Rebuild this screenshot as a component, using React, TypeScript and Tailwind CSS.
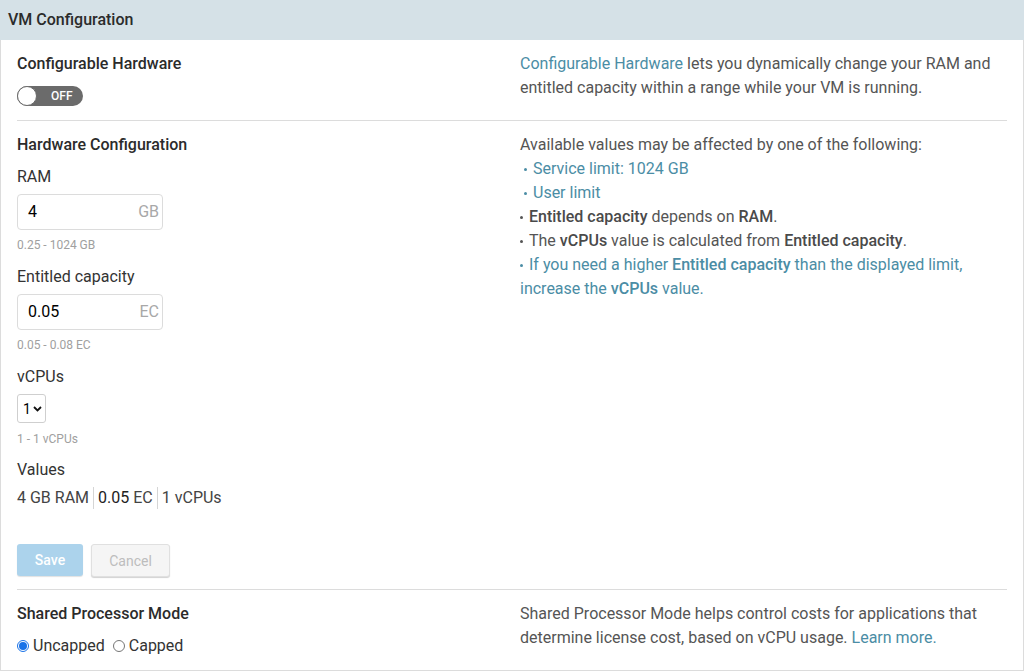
function Bullet({ indent = false, children }: { indent?: boolean; children: React.ReactNode }) {
    return (
        <div className={indent ? "flex items-center pl-[4px]" : "flex items-center"}>
            <span className="mr-[6px] inline-block h-[3px] w-[3px] shrink-0 rounded-full bg-current" />
            <span>{children}</span>
        </div>
    );
}

function UnitInput({ value, unit }: { value: string; unit: string }) {
    return (
        <div className="mt-[5px] flex h-[36px] w-[146px] items-center justify-between rounded-[4px] border border-[#dcdcdc] bg-white pl-[10px] pr-[3px]">
            <span className="text-[16px] text-black">{value}</span>
            <span className="text-[16px] text-[#a8a8a8]">{unit}</span>
        </div>
    );
}

export default function App() {
    return (
        <div className="min-h-[671px] bg-white font-['Roboto','Liberation_Sans',sans-serif] text-[16px] leading-[24px] text-[#333]">
            {/* Header */}
            <div className="flex h-[40px] items-center bg-[#d5e1e7] px-[8px] font-medium text-[#2b2b2b]">
                VM Configuration
            </div>
            <div className="h-[631px] border-x border-b border-[#dcdcdc] px-[16px]">
                {/* Configurable hardware */}
                <div className="grid grid-cols-2 gap-4 border-b border-[#dcdcdc] pb-[14px] pt-[12px]">
                    <div>
                        <div className="font-medium text-[#2b2b2b]">Configurable Hardware</div>
                        <div className="mt-[10px] flex h-[20px] w-[66px] items-center rounded-full bg-[#6b6b6b]">
                            <span className="h-[20px] w-[20px] rounded-full border border-[#6b6b6b] bg-white" />
                            <span className="ml-[14px] text-[12px] font-medium leading-none text-white">OFF</span>
                        </div>
                    </div>
                    <div className="text-[#555]">
                        <span className="text-[#4b8da5]">Configurable Hardware</span> lets you dynamically change your RAM and entitled capacity within a range while your VM is running.
                    </div>
                </div>

                {/* Hardware configuration */}
                <div className="grid grid-cols-2 gap-4 border-b border-[#dcdcdc] pb-[12px] pt-[12px]">
                    <div>
                        <div className="font-medium text-[#2b2b2b]">Hardware Configuration</div>
                        <div className="mt-[8px]">RAM</div>
                        <UnitInput value="4" unit="GB" />
                        <div className="mt-[7px] text-[12px] leading-[16px] text-[#a0a0a0]">0.25 - 1024 GB</div>
                        <div className="mt-[12px]">Entitled capacity</div>
                        <UnitInput value="0.05" unit="EC" />
                        <div className="mt-[7px] text-[12px] leading-[16px] text-[#a0a0a0]">0.05 - 0.08 EC</div>
                        <div className="mt-[12px]">vCPUs</div>
                        <div className="mt-[5px] flex h-[29px] w-[29px] items-center gap-[2px] rounded-[3px] border border-[#cfcfcf] pl-[5px]">
                            <span className="text-[14px] text-black">1</span>
                            <svg width="9" height="6" viewBox="0 0 9 6">
                                <path d="M1 1l3.5 3.5L8 1" fill="none" stroke="#111" strokeWidth="1.8" />
                            </svg>
                        </div>
                        <div className="mt-[8px] text-[12px] leading-[16px] text-[#a0a0a0]">1 - 1 vCPUs</div>
                        <div className="mt-[11px]">Values</div>
                        <div className="mt-[4px] flex items-center text-[#444]">
                            <span>4 GB RAM</span>
                            <span className="mx-[4px] h-[22px] w-px bg-[#d5d5d5]" />
                            <span>
                                <span className="text-[#222]">0.05</span> EC
                            </span>
                            <span className="mx-[4px] h-[22px] w-px bg-[#d5d5d5]" />
                            <span>1 vCPUs</span>
                        </div>
                        <div className="mt-[34px] flex gap-[8px]">
                            <button className="h-[32px] w-[66px] rounded-[3px] bg-[#acd3ec] text-[14px] font-medium text-white shadow-[0_1px_1px_rgba(0,0,0,0.12)]">
                                Save
                            </button>
                            <button className="h-[33px] w-[79px] rounded-[3px] border border-[#e0e0e0] bg-[#f5f5f5] text-[14px] text-[#bdbdbd] shadow-[0_1px_1px_rgba(0,0,0,0.18)]">
                                Cancel
                            </button>
                        </div>
                    </div>
                    <div className="text-[#555]">
                        <div>Available values may be affected by one of the following:</div>
                        <div className="text-[#4b8da5]">
                            <Bullet indent>Service limit: 1024 GB</Bullet>
                            <Bullet indent>User limit</Bullet>
                        </div>
                        <Bullet>
                            <b className="font-medium text-[#4a4a4a]">Entitled capacity</b> depends on <b className="font-medium text-[#4a4a4a]">RAM</b>.
                        </Bullet>
                        <Bullet>
                            The <b className="font-medium text-[#4a4a4a]">vCPUs</b> value is calculated from <b className="font-medium text-[#4a4a4a]">Entitled capacity</b>.
                        </Bullet>
                        <div className="text-[#4b8da5]">
                            <span className="mr-[6px] inline-block h-[3px] w-[3px] rounded-full bg-current align-middle" />
                            If you need a higher <b className="font-medium">Entitled capacity</b> than the displayed limit, increase the <b className="font-medium">vCPUs</b> value.
                        </div>
                    </div>
                </div>

                {/* Shared processor mode */}
                <div className="grid grid-cols-2 gap-4 pt-[12px]">
                    <div>
                        <div className="font-medium text-[#2b2b2b]">Shared Processor Mode</div>
                        <div className="mt-[8px] flex items-center">
                            <span className="flex h-[12px] w-[12px] items-center justify-center rounded-full border border-[#1a73e8]">
                                <span className="h-[8px] w-[8px] rounded-full bg-[#1a73e8]" />
                            </span>
                            <span className="ml-[4px]">Uncapped</span>
                            <span className="ml-[8px] h-[12px] w-[12px] rounded-full border border-[#767676]" />
                            <span className="ml-[4px]">Capped</span>
                        </div>
                    </div>
                    <div className="text-[#555]">
                        Shared Processor Mode helps control costs for applications that determine license cost, based on vCPU usage.{" "}
                        <span className="text-[#4b8da5]">Learn more.</span>
                    </div>
                </div>
            </div>
        </div>
    );
}
